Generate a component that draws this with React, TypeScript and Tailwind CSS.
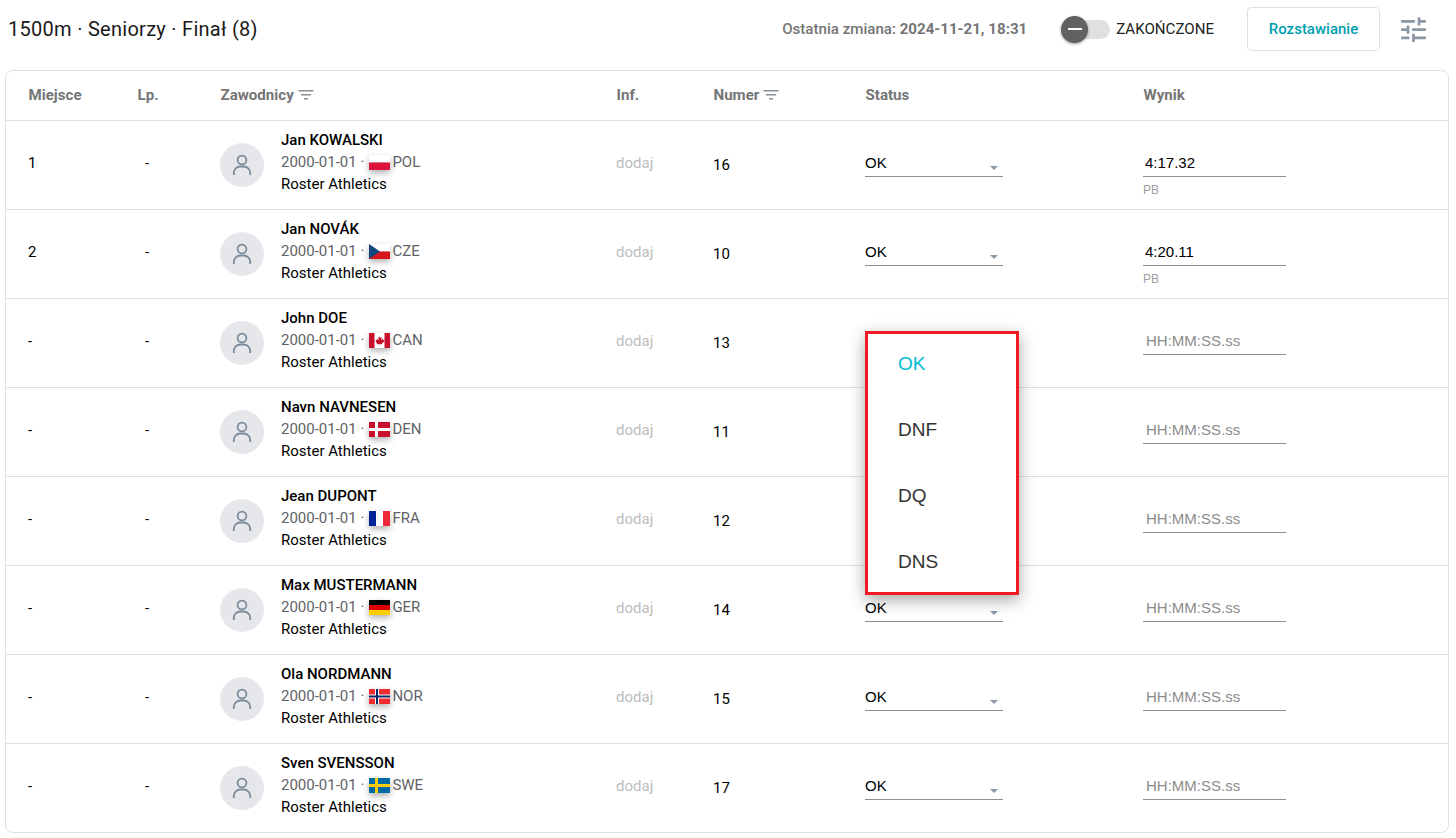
import React from "react";

const GRID = "grid grid-cols-[109px_83px_396px_97px_152px_278px_1fr] pl-[22px]";
const HEAD = "grid grid-cols-[109px_83px_396px_97px_152px_278px_1fr] pl-[22.5px]";

function FilterIcon() {
  return (
    <svg width="16" height="12" viewBox="0 0 16 12" className="ml-1 inline-block">
      <rect x="0.5" y="1" width="15" height="1.5" fill="#8a8f94" />
      <rect x="3" y="5" width="10" height="1.5" fill="#8a8f94" />
      <rect x="6" y="9" width="4" height="1.5" fill="#8a8f94" />
    </svg>
  );
}

function PersonIcon() {
  return (
    <svg width="20" height="22" viewBox="0 0 20 22" fill="none" stroke="#7b8b9a" strokeWidth="1.8">
      <circle cx="10" cy="6" r="4.4" />
      <path d="M1.8 21v-2c0-3.800 3-6.500 6.500-6.500h3.400c3.500 0 6.500 2.700 6.500 6.500v2" />
    </svg>
  );
}

function Flag({ code }: { code: string }) {
  const body: Record<string, React.ReactNode> = {
    POL: (
      <>
        <rect width="21" height="7.5" fill="#fff" />
        <rect y="7.5" width="21" height="7.5" fill="#dc143c" />
      </>
    ),
    CZE: (
      <>
        <rect width="21" height="7.5" fill="#fff" />
        <rect y="7.5" width="21" height="7.5" fill="#d7141a" />
        <path d="M0 0L11 7.5L0 15Z" fill="#11457e" />
      </>
    ),
    CAN: (
      <>
        <rect width="21" height="15" fill="#fff" />
        <rect width="5.5" height="15" fill="#c8102e" />
        <rect x="15.5" width="5.5" height="15" fill="#c8102e" />
        <path d="M10.5 3l1 1.800 1.200-.5-.4 2.600 1.500-1 .4 1 1.300-.2-.5 1.500.5.400-2.500 1.700.2 1-2.500-.3v1.800h-.4V11l-2.500.3.200-1L6.500 8.600l.5-.4-.5-1.500 1.300.2.400-1 1.500 1-.4-2.600 1.200.5z" fill="#c8102e" />
      </>
    ),
    DEN: (
      <>
        <rect width="21" height="15" fill="#c8102e" />
        <rect x="6" width="3" height="15" fill="#fff" />
        <rect y="6" width="21" height="3" fill="#fff" />
      </>
    ),
    FRA: (
      <>
        <rect width="7" height="15" fill="#002395" />
        <rect x="7" width="7" height="15" fill="#fff" />
        <rect x="14" width="7" height="15" fill="#ed2939" />
      </>
    ),
    GER: (
      <>
        <rect width="21" height="5" fill="#000" />
        <rect y="5" width="21" height="5" fill="#dd0000" />
        <rect y="10" width="21" height="5" fill="#ffce00" />
      </>
    ),
    NOR: (
      <>
        <rect width="21" height="15" fill="#ef2b2d" />
        <rect x="6" width="4" height="15" fill="#fff" />
        <rect y="5.5" width="21" height="4" fill="#fff" />
        <rect x="7" width="2" height="15" fill="#002868" />
        <rect y="6.5" width="21" height="2" fill="#002868" />
      </>
    ),
    SWE: (
      <>
        <rect width="21" height="15" fill="#006aa7" />
        <rect x="6" width="3" height="15" fill="#fecc00" />
        <rect y="6" width="21" height="3" fill="#fecc00" />
      </>
    ),
  };
  return (
    <svg
      width="21"
      height="15"
      viewBox="0 0 21 15"
      className="ml-[5px] mr-[2px] inline-block align-[-3px] drop-shadow-[0_3px_3px_rgba(0,0,0,0.3)]"
    >
      {body[code]}
    </svg>
  );
}

type Row = {
  place: string;
  name: string;
  code: string;
  num: string;
  result?: string;
  status: boolean;
};

const rows: Row[] = [
  { place: "1", name: "Jan KOWALSKI", code: "POL", num: "16", result: "4:17.32", status: true },
  { place: "2", name: "Jan NOVÁK", code: "CZE", num: "10", result: "4:20.11", status: true },
  { place: "-", name: "John DOE", code: "CAN", num: "13", status: false },
  { place: "-", name: "Navn NAVNESEN", code: "DEN", num: "11", status: false },
  { place: "-", name: "Jean DUPONT", code: "FRA", num: "12", status: false },
  { place: "-", name: "Max MUSTERMANN", code: "GER", num: "14", status: true },
  { place: "-", name: "Ola NORDMANN", code: "NOR", num: "15", status: true },
  { place: "-", name: "Sven SVENSSON", code: "SWE", num: "17", status: true },
];

function TableRow({ r }: { r: Row }) {
  return (
    <div className={`${GRID} h-[89px] items-center border-b border-[#e0e0e0] text-[15px] text-black last:h-[88px] last:border-b-0`}>
      <div className="pb-[3px]">{r.place}</div>
      <div className="pb-[3px] pl-[8px]">-</div>
      <div className="flex items-center">
        <div className="flex h-11 w-11 items-center justify-center rounded-full bg-[#e5e7ea]">
          <PersonIcon />
        </div>
        <div className="mb-[6px] ml-[17px] leading-[22px]">
          <div className="font-medium">{r.name}</div>
          <div className="whitespace-nowrap text-[#5f6368]">
            2000-01-01 ·<Flag code={r.code} />
            {r.code}
          </div>
          <div>Roster Athletics</div>
        </div>
      </div>
      <div className="pb-[3px] text-[#bdbdbd]">dodaj</div>
      <div className="pt-[1px]">{r.num}</div>
      <div className="self-start pt-[32px] font-['Liberation_Sans',sans-serif]">
        {r.status && (
          <div className="relative h-[24px] w-[138px] border-b border-[#8f8f8f] leading-[20px]">
            OK
            <span className="absolute right-[5px] top-[13px] h-0 w-0 border-x-[4px] border-t-[4px] border-x-transparent border-t-[#8a97a5]" />
          </div>
        )}
      </div>
      <div className="self-start pt-[32px] font-['Liberation_Sans',sans-serif]">
        <div className={`h-[24px] w-[143px] border-b border-[#8f8f8f] leading-[20px] ${r.result ? "pl-[2px] text-black" : "pl-[3px] text-[#8c8c8c]"}`}>
          {r.result ?? "HH:MM:SS.ss"}
        </div>
        {r.result && <div className="mt-[5px] text-xs leading-[16px] text-[#9e9e9e]">PB</div>}
      </div>
    </div>
  );
}

export default function App() {
  return (
    <div className="relative h-[838px] w-[1456px] overflow-hidden bg-white font-['Roboto',sans-serif]">
      <header className="flex h-[70px] items-start pl-2 pr-[26px]">
        <h1 className="mt-[17px] text-[20px] leading-[24px] tracking-[0.28px] text-[#1a1a1a]">1500m · Seniorzy · Finał (8)</h1>
        <div className="ml-auto mt-[7px] flex h-[44px] items-center">
          <div className="text-[15.1px] font-medium text-[#757575]">
            Ostatnia zmiana: <span className="font-bold">2024-11-21, 18:31</span>
          </div>
          <div className="relative ml-[35px] h-[19px] w-[48px] rounded-full bg-[#e0e0e0]">
            <div className="absolute left-[-1px] top-[-4px] flex h-[27px] w-[27px] items-center justify-center rounded-full bg-[#616161] shadow-[0_1px_3px_rgba(0,0,0,0.4)]">
              <div className="h-[2px] w-[14px] bg-white" />
            </div>
          </div>
          <div className="ml-[6px] text-[15.1px] text-[#212121]">ZAKOŃCZONE</div>
          <button className="ml-[33px] h-[44px] w-[133px] rounded-[4px] border border-[#e0e0e0] bg-white text-[15px] font-medium text-[#00a0b0]">
            Rozstawianie
          </button>
          <svg width="33" height="33" viewBox="0 0 24 24" className="ml-[17px]" fill="#8a97a5">
            <path d="M3 17v2h6v-2H3zM3 5v2h10V5H3zm10 16v-2h8v-2h-8v-2h-2v6h2zM7 9v2H3v2h4v2h2V9H7zm14 4v-2H11v2h10zm-6-4h2V7h4V5h-4V3h-2v6z" />
          </svg>
        </div>
      </header>
      <main className="mx-[5px] w-[1444px] rounded-lg border border-[#e0e0e0]">
        <div className={`${HEAD} h-[50px] items-center border-b border-[#e0e0e0] pb-[1px] text-[15.1px] font-bold text-[#757575]`}>
          <div>Miejsce</div>
          <div>Lp.</div>
          <div className="flex items-center">
            Zawodnicy
            <FilterIcon />
          </div>
          <div>Inf.</div>
          <div className="flex items-center">
            Numer
            <FilterIcon />
          </div>
          <div>Status</div>
          <div>Wynik</div>
        </div>
        {rows.map((r) => (
          <TableRow key={r.name} r={r} />
        ))}
      </main>
      <div className="absolute left-[865px] top-[331px] h-[264px] w-[154px] border-[3px] border-[#ed1c24] bg-white pl-[30px] font-['Liberation_Sans',sans-serif] text-[19px] text-[#333] shadow-[0_5px_15px_rgba(0,0,0,0.35)]">
        <div className="-mt-[3px] flex h-[66px] items-center text-[#00bcd4]">OK</div>
        <div className="flex h-[66px] items-center">DNF</div>
        <div className="flex h-[66px] items-center">DQ</div>
        <div className="flex h-[66px] items-center">DNS</div>
      </div>
    </div>
  );
}
